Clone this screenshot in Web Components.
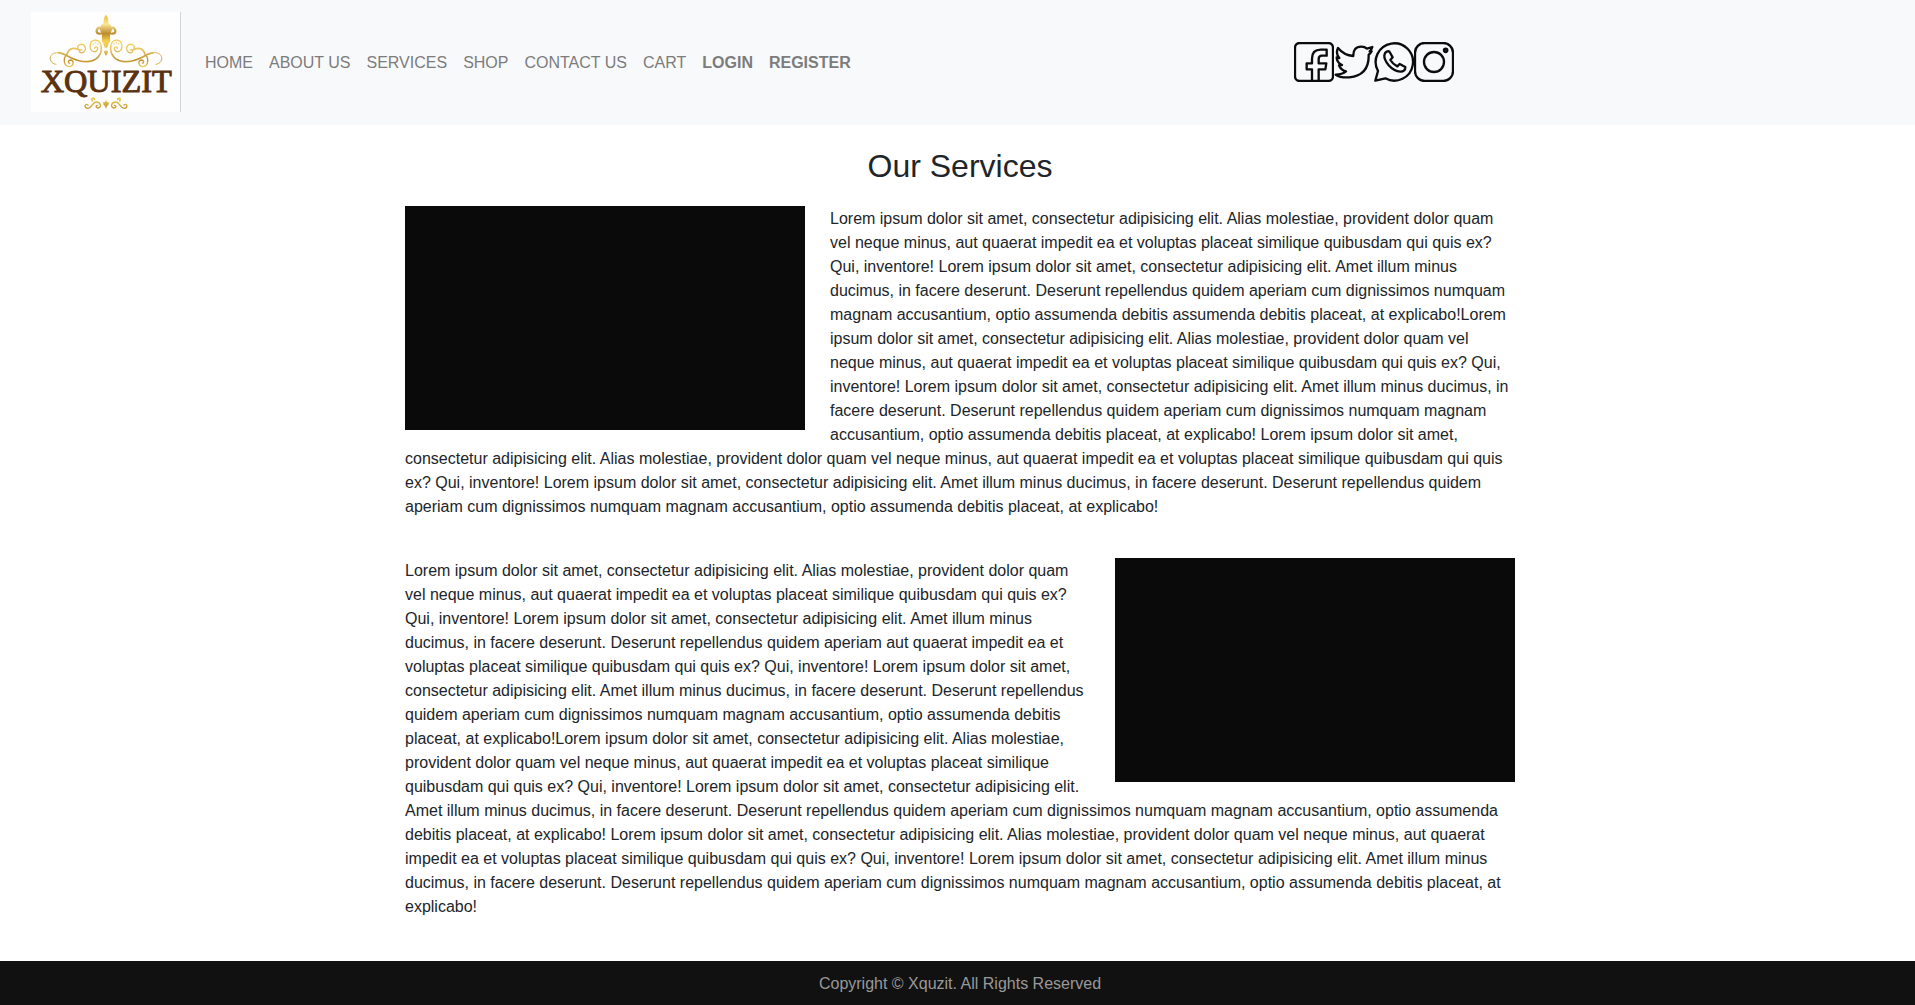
<!DOCTYPE html>
<html lang="en">
<head>
<meta charset="utf-8">
<meta name="viewport" content="width=device-width, initial-scale=1">
<title>Our Services</title>
<style>
  body {
    margin: 0;
    background: #fff;
    color: #212529;
    font: 16px/24px "Liberation Sans", Arial, sans-serif;
  }
</style>
</head>
<body>
<services-page></services-page>

<script>
class BrandLogo extends HTMLElement {
  connectedCallback() {
    this.attachShadow({ mode: "open" }).innerHTML = `
      <style>
        :host { display: block; flex: none; width: 150px; height: 100px; }
        svg { display: block; width: 100%; height: 100%; }
        text { font: 97px "Liberation Serif", serif; fill: #5b3210; stroke: #5b3210; stroke-width: 3; }
      </style>
      <svg viewBox="93 36 450 300" role="img" aria-label="Xquizit">
        <defs>
          <linearGradient id="gold" gradientUnits="userSpaceOnUse" x1="0" y1="44" x2="0" y2="202">
            <stop offset="0" stop-color="#f0b92c"/><stop offset=".18" stop-color="#fbe596"/>
            <stop offset=".36" stop-color="#bd8b2c"/><stop offset=".5" stop-color="#f6d04f"/>
            <stop offset=".68" stop-color="#e6c468"/><stop offset=".86" stop-color="#bf8d2b"/>
            <stop offset="1" stop-color="#f1d064"/>
          </linearGradient>
          <linearGradient id="gold2" gradientUnits="userSpaceOnUse" x1="0" y1="290" x2="0" y2="328">
            <stop offset="0" stop-color="#f3cf50"/><stop offset="1" stop-color="#c6952f"/>
          </linearGradient>
          <g id="scroll" fill="none" stroke="url(#gold)" stroke-linecap="round">
            <path stroke-width="3" d="M168 193C146 191 143 160 170 158C182 157 192 162 204 169"/>
            <path stroke-width="5" d="M176 158C205 163 220 186 262 185C292 184 306 162 304 140"/>
            <path stroke-width="4" d="M304 142C303 114 270 113 270 139C271 158 292 160 293 146C293 139 284 139 284 145"/>
            <path stroke-width="5" d="M202 160C206 146 222 140 238 150"/>
            <path stroke-width="4" d="M234 148C229 134 246 128 254 138C261 148 251 161 242 158C235 155 239 147 245 150"/>
            <path stroke-width="4" d="M202 161C188 174 190 198 207 200C222 199 223 181 212 180C204 180 203 189 209 190"/>
            <path stroke-width="7" d="M309 124C311 98 304 82 296 83C286 91 289 102 300 101"/>
            <path stroke-width="4" d="M280 132v.1M287 128v.1M294 132v.1"/>
          </g>
          <g id="foot" fill="none" stroke="url(#gold2)" stroke-linecap="round">
            <path stroke-width="4" d="M264 315C256 308 250 322 262 325C276 327 276 306 288 306C303 306 306 323 294 324C286 323 287 315 293 316"/>
            <path stroke-width="5" d="M277 302C272 295 282 292 283 298"/>
          </g>
        </defs>
        <rect x="93" y="36" width="450" height="300" fill="#fefefe"/>
        <rect x="540" y="36" width="3" height="300" fill="#d2d4d6"/>
        <use href="#scroll"/>
        <use href="#scroll" transform="matrix(-1 0 0 1 636 0)"/>
        <path fill="url(#gold)" d="M318 44C325 52 326 62 325 70C340 76 336 92 330 105C327 118 328 130 322 143H314C308 130 309 118 306 105C300 92 296 76 311 70C310 62 311 52 318 44ZM312 154Q318 149 324 154Q325 160 318 168Q311 160 312 154Z"/>
        <text x="122" y="277">XQUIZIT</text>
        <use href="#foot"/>
        <use href="#foot" transform="matrix(-1 0 0 1 636 0)"/>
        <path fill="url(#gold2)" d="M318 299L321 307H327Q327 315 321 319L318 327L315 319Q309 315 309 307H315Z"/>
      </svg>`;
  }
}
customElements.define("brand-logo", BrandLogo);

const SOCIAL_PATHS = {
  facebook: '<rect x="3" y="3" width="114" height="114" rx="14"/><path d="M54 117V82H38V64H54V50Q54 23 80 23H98V41H84Q74 41 74 51V64H97L94 82H74V117"/>',
  twitter: '<path d="M12 18Q30 40 58 42Q57 14 82 14Q92 14 99 20L115 15Q113 23 107 28L113 28Q110 34 104 38Q106 100 46 106Q20 108 5 98Q25 97 36 88Q20 84 15 70L24 69Q8 62 8 46L16 48Q4 34 12 18Z"/>',
  whatsapp: '<path d="M4 116L12 87A56 56 0 1 1 34 109Z"/><path d="M38 29Q44 26 47 30L56 46L49 54Q56 66 70 73L77 66L94 75Q94 89 79 89Q60 88 44 70Q30 52 31 40Q32 32 38 29Z"/>',
  instagram: '<rect x="3" y="3" width="114" height="114" rx="29"/><circle cx="60" cy="60" r="30"/><circle cx="95" cy="25" r="5" fill="#444"/>'
};

class SocialLink extends HTMLElement {
  connectedCallback() {
    const name = this.getAttribute("name");
    this.attachShadow({ mode: "open" }).innerHTML = `
      <style>
        :host { display: block; }
        a, svg { display: block; width: 40px; height: 40px; }
        svg { fill: none; stroke: #0c0c0c; stroke-width: 7; stroke-linejoin: round; }
      </style>
      <a href="#${name}" aria-label="${name}"><svg viewBox="0 0 120 120" aria-hidden="true">${SOCIAL_PATHS[name]}</svg></a>`;
  }
}
customElements.define("social-link", SocialLink);

class NavItem extends HTMLElement {
  connectedCallback() {
    this.attachShadow({ mode: "open" }).innerHTML = `
      <style>
        :host { display: block; }
        :host([strong]) { font-weight: bold; }
        a { display: block; padding: 8px; color: #7c7c7d; text-decoration: none; white-space: nowrap; }
      </style>
      <a href="#"><slot></slot></a>`;
  }
}
customElements.define("nav-item", NavItem);

class SiteHeader extends HTMLElement {
  connectedCallback() {
    this.attachShadow({ mode: "open" }).innerHTML = `
      <style>
        :host { display: block; background: #f8f9fb; }
        header { display: flex; align-items: center; padding: 12px 26px 13px 31px; }
        nav { display: flex; margin-left: 16px; padding-top: 2px; }
        .social { display: flex; margin: 0 auto; }
      </style>
      <header>
        <brand-logo></brand-logo>
        <nav aria-label="Main">
          <nav-item>HOME</nav-item>
          <nav-item>ABOUT US</nav-item>
          <nav-item>SERVICES</nav-item>
          <nav-item>SHOP</nav-item>
          <nav-item>CONTACT US</nav-item>
          <nav-item>CART</nav-item>
          <nav-item strong>LOGIN</nav-item>
          <nav-item strong>REGISTER</nav-item>
        </nav>
        <div class="social">
          <social-link name="facebook"></social-link>
          <social-link name="twitter"></social-link>
          <social-link name="whatsapp"></social-link>
          <social-link name="instagram"></social-link>
        </div>
      </header>`;
  }
}
customElements.define("site-header", SiteHeader);

class ServiceBlock extends HTMLElement {
  connectedCallback() {
    this.attachShadow({ mode: "open" }).innerHTML = `
      <style>
        :host { display: flow-root; margin-bottom: 39px; }
        .media { float: left; width: 400px; height: 224px; margin-right: 25px; background: #0a0a0a; }
        :host([side="right"]) .media { float: right; margin: 0 0 0 25px; }
        p { margin: 0; padding-top: 1px; }
      </style>
      <div class="media"></div>
      <p><slot></slot></p>`;
  }
}
customElements.define("service-block", ServiceBlock);

class SiteFooter extends HTMLElement {
  connectedCallback() {
    this.attachShadow({ mode: "open" }).innerHTML = `
      <style>
        :host { display: block; background: #111; color: #999; }
        footer { padding: 11px 0 9px 5px; text-align: center; }
      </style>
      <footer><slot></slot></footer>`;
  }
}
customElements.define("site-footer", SiteFooter);

class ServicesPage extends HTMLElement {
  connectedCallback() {
    this.attachShadow({ mode: "open" }).innerHTML = `
      <style>
        :host { display: flex; flex-direction: column; min-height: 100vh; }
        main { flex: 1; padding: 22px 0 0 5px; }
        .container { max-width: 1110px; margin: 0 auto; }
        h2 { margin: 0 0 21px; font-size: 32px; line-height: 38px; font-weight: normal; text-align: center; }
      </style>
      <site-header></site-header>
      <main>
        <div class="container">
          <h2>Our Services</h2>
          <service-block>Lorem ipsum dolor sit amet, consectetur adipisicing elit. Alias molestiae, provident dolor quam vel neque minus, aut quaerat impedit ea et voluptas placeat similique quibusdam qui quis ex? Qui, inventore! Lorem ipsum dolor sit amet, consectetur adipisicing elit. Amet illum minus ducimus, in facere deserunt. Deserunt repellendus quidem aperiam cum dignissimos numquam magnam accusantium, optio assumenda debitis assumenda debitis placeat, at explicabo!Lorem ipsum dolor sit amet, consectetur adipisicing elit. Alias molestiae, provident dolor quam vel neque minus, aut quaerat impedit ea et voluptas placeat similique quibusdam qui quis ex? Qui, inventore! Lorem ipsum dolor sit amet, consectetur adipisicing elit. Amet illum minus ducimus, in facere deserunt. Deserunt repellendus quidem aperiam cum dignissimos numquam magnam accusantium, optio assumenda debitis placeat, at explicabo! Lorem ipsum dolor sit amet, consectetur adipisicing elit. Alias molestiae, provident dolor quam vel neque minus, aut quaerat impedit ea et voluptas placeat similique quibusdam qui quis ex? Qui, inventore! Lorem ipsum dolor sit amet, consectetur adipisicing elit. Amet illum minus ducimus, in facere deserunt. Deserunt repellendus quidem aperiam cum dignissimos numquam magnam accusantium, optio assumenda debitis placeat, at explicabo!</service-block>
          <service-block side="right">Lorem ipsum dolor sit amet, consectetur adipisicing elit. Alias molestiae, provident dolor quam vel neque minus, aut quaerat impedit ea et voluptas placeat similique quibusdam qui quis ex? Qui, inventore! Lorem ipsum dolor sit amet, consectetur adipisicing elit. Amet illum minus ducimus, in facere deserunt. Deserunt repellendus quidem aperiam aut quaerat impedit ea et voluptas placeat similique quibusdam qui quis ex? Qui, inventore! Lorem ipsum dolor sit amet, consectetur adipisicing elit. Amet illum minus ducimus, in facere deserunt. Deserunt repellendus quidem aperiam cum dignissimos numquam magnam accusantium, optio assumenda debitis placeat, at explicabo!Lorem ipsum dolor sit amet, consectetur adipisicing elit. Alias molestiae, provident dolor quam vel neque minus, aut quaerat impedit ea et voluptas placeat similique quibusdam qui quis ex? Qui, inventore! Lorem ipsum dolor sit amet, consectetur adipisicing elit. Amet illum minus ducimus, in facere deserunt. Deserunt repellendus quidem aperiam cum dignissimos numquam magnam accusantium, optio assumenda debitis placeat, at explicabo! Lorem ipsum dolor sit amet, consectetur adipisicing elit. Alias molestiae, provident dolor quam vel neque minus, aut quaerat impedit ea et voluptas placeat similique quibusdam qui quis ex? Qui, inventore! Lorem ipsum dolor sit amet, consectetur adipisicing elit. Amet illum minus ducimus, in facere deserunt. Deserunt repellendus quidem aperiam cum dignissimos numquam magnam accusantium, optio assumenda debitis placeat, at explicabo!</service-block>
        </div>
      </main>
      <site-footer>Copyright © Xquzit. All Rights Reserved</site-footer>`;
  }
}
customElements.define("services-page", ServicesPage);
</script>
</body>
</html>
